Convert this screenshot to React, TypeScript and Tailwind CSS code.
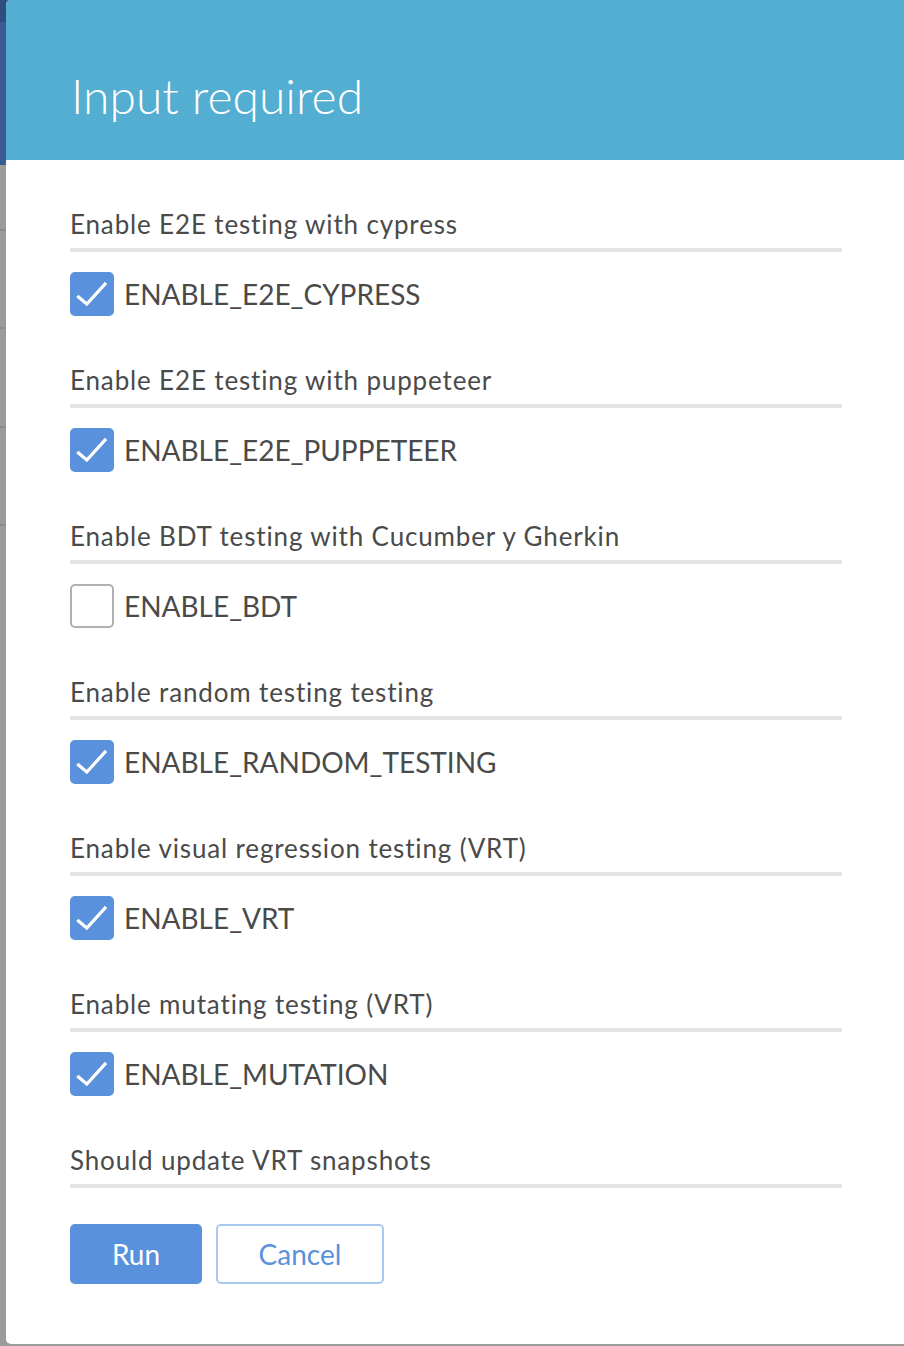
import React from "react";

const sections: { label: string; name?: string; checked?: boolean }[] = [
  { label: "Enable E2E testing with cypress", name: "ENABLE_E2E_CYPRESS", checked: true },
  { label: "Enable E2E testing with puppeteer", name: "ENABLE_E2E_PUPPETEER", checked: true },
  { label: "Enable BDT testing with Cucumber y Gherkin", name: "ENABLE_BDT", checked: false },
  { label: "Enable random testing testing", name: "ENABLE_RANDOM_TESTING", checked: true },
  { label: "Enable visual regression testing (VRT)", name: "ENABLE_VRT", checked: true },
  { label: "Enable mutating testing (VRT)", name: "ENABLE_MUTATION", checked: true },
];

function Checkbox({ checked }: { checked: boolean }) {
  if (checked) {
    return (
      <div className="w-[44px] h-[44px] rounded-[5px] bg-[#5a91dc] flex items-center justify-center shrink-0">
        <svg width="44" height="44" viewBox="0 0 44 44">
          <path d="M8.5 25 L16.8 32 L35 12" fill="none" stroke="#ffffff" strokeWidth="3.2" strokeLinecap="square" strokeLinejoin="miter" />
        </svg>
      </div>
    );
  }
  return <div className="w-[44px] h-[44px] rounded-[5px] border-2 border-[#b0b0b0] bg-white shrink-0" />;
}

export default function App() {
  return (
    <div
      className="w-[904px] h-[1346px] flex bg-[#9b9b9b] overflow-hidden"
      style={{ fontFamily: "Lato, 'Open Sans', sans-serif" }}
    >
      <div className="w-[6px] flex flex-col shrink-0">
        <div className="h-[22px] bg-[#2d4e7f]" />
        <div className="h-[143px] bg-[#3a5b91]" />
        <div className="h-[64px] bg-[#9b9b9b]" />
        <div className="h-[2px] bg-[#8c8c8c]" />
        <div className="h-[96px] bg-[#9b9b9b]" />
        <div className="h-[2px] bg-[#8c8c8c]" />
        <div className="h-[97px] bg-[#9b9b9b]" />
        <div className="h-[2px] bg-[#8c8c8c]" />
        <div className="h-[96px] bg-[#9b9b9b]" />
        <div className="h-[2px] bg-[#8c8c8c]" />
        <div className="flex-1 bg-[#9b9b9b]" />
      </div>
      <div className="flex-1 h-[1346px] bg-[linear-gradient(#3a5b91_0,#3a5b91_165px,#9b9b9b_165px)]">
        <div className="h-[1344px] bg-white rounded-l-[5px] overflow-hidden flex flex-col">
          <div className="h-[160px] bg-[#53aed2] pl-[65px] pt-[67px] shrink-0">
            <div className="text-[48px] leading-[1.2] font-light text-white">Input required</div>
          </div>
          <div className="pl-[64px] pr-[62px] pt-[49px] flex flex-col gap-[49px]">
            {sections.map((s) => (
              <div key={s.label} className="flex flex-col">
                <div className="text-[26px] leading-[31px] tracking-[0.85px] text-[#4a4a4a]">{s.label}</div>
                <div className="mt-[8px] h-[4px] bg-[#e4e4e4]" />
                <div className="mt-[20px] flex items-center gap-[10px]">
                  <Checkbox checked={!!s.checked} />
                  <span className="text-[28px] leading-[34px] text-[#4a4a4a]">{s.name}</span>
                </div>
              </div>
            ))}
            <div className="flex flex-col">
              <div className="text-[26px] leading-[31px] tracking-[0.85px] text-[#4a4a4a]">Should update VRT snapshots</div>
              <div className="mt-[8px] h-[4px] bg-[#e4e4e4]" />
              <div className="mt-[36px] flex gap-[14px]">
                <button className="w-[132px] h-[60px] rounded-[5px] bg-[#5a91dc] text-white text-[28px]">Run</button>
                <button className="w-[168px] h-[60px] rounded-[5px] border-2 border-[#a9c8ef] bg-white text-[#5a91dc] text-[28px]">Cancel</button>
              </div>
            </div>
          </div>
        </div>
      </div>
    </div>
  );
}
